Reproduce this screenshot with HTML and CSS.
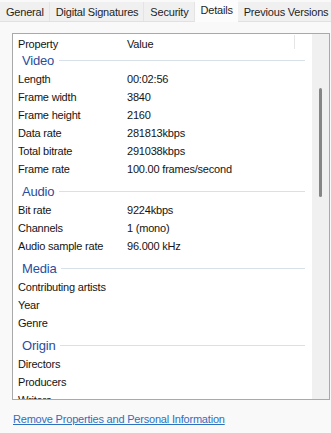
FILE: index.html
```html
<!DOCTYPE html>
<html lang="en">
<head>
  <meta charset="UTF-8" />
  <title>Properties - Details</title>
  <link rel="stylesheet" href="styles.css">
</head>
<body>
  <div class="tabs">
    <div class="tab">General</div>
    <div class="tab">Digital Signatures</div>
    <div class="tab">Security</div>
    <div class="tab active">Details</div>
    <div class="tab">Previous Versions</div>
  </div>

  <div class="panel">
    <div class="listbox">
      <div class="list">
        <div class="list-head">
          <span class="name">Property</span>
          <span class="value">Value</span>
          <span class="rest"></span>
        </div>
        <div class="list-body">
          <div class="group"><span>Video</span><i class="rule"></i></div>
          <div class="row"><span class="name">Length</span><span class="value">00:02:56</span></div>
          <div class="row"><span class="name">Frame width</span><span class="value">3840</span></div>
          <div class="row"><span class="name">Frame height</span><span class="value">2160</span></div>
          <div class="row"><span class="name">Data rate</span><span class="value">281813kbps</span></div>
          <div class="row"><span class="name">Total bitrate</span><span class="value">291038kbps</span></div>
          <div class="row"><span class="name">Frame rate</span><span class="value">100.00 frames/second</span></div>

          <div class="group"><span>Audio</span><i class="rule"></i></div>
          <div class="row"><span class="name">Bit rate</span><span class="value">9224kbps</span></div>
          <div class="row"><span class="name">Channels</span><span class="value">1 (mono)</span></div>
          <div class="row"><span class="name">Audio sample rate</span><span class="value">96.000 kHz</span></div>

          <div class="group"><span>Media</span><i class="rule"></i></div>
          <div class="row"><span class="name">Contributing artists</span><span class="value"></span></div>
          <div class="row"><span class="name">Year</span><span class="value"></span></div>
          <div class="row"><span class="name">Genre</span><span class="value"></span></div>

          <div class="group"><span>Origin</span><i class="rule"></i></div>
          <div class="row"><span class="name">Directors</span><span class="value"></span></div>
          <div class="row"><span class="name">Producers</span><span class="value"></span></div>
          <div class="row"><span class="name">Writers</span><span class="value"></span></div>
        </div>
      </div>
      <div class="scrollbar"><div class="thumb"></div></div>
    </div>

    <a class="link" href="#">Remove Properties and Personal Information</a>
  </div>
</body>
</html>
```

FILE: styles.css
```css
body {
  margin: 0;
  background: #f9f9f9;
  font-family: 'Liberation Sans', Arial, sans-serif;
  font-size: 11px;
  letter-spacing: -0.2px;
  color: #141414;
  width: 331px;
  height: 433px;
  overflow: hidden;
}

.tabs {
  display: flex;
  height: 22px;
  box-sizing: border-box;
  border-bottom: 1px solid #e1e1e1;
  white-space: nowrap;
}

.tab {
  margin-top: 2px;
  padding: 0 5px 0 6px;
  line-height: 21px;
  background: #f0f0f0;
  border-right: 1px solid #e4e4e4;
  color: #1e1e1e;
}

.tab.active {
  margin-top: 0;
  line-height: 20px;
  height: 22px;
  background: #fcfcfc;
  border-right: none;
}

.tab:last-child {
  border-right: none;
}

.panel {
  padding: 11px 1px 0 12px;
}

.listbox {
  display: flex;
  height: 365px;
  border: 1px solid #a9a9a9;
  background: #fff;
}

.list {
  flex: 1;
  display: flex;
  flex-direction: column;
  overflow: hidden;
}

.list-head {
  display: flex;
  height: 18px;
  line-height: 20px;
  flex-shrink: 0;
  background: #fff;
  position: relative;
  z-index: 1;
}

.name {
  width: 114px;
  padding-left: 5px;
  box-sizing: border-box;
  white-space: nowrap;
}

.value {
  width: 167px;
  white-space: nowrap;
}

.list-head .rest {
  flex: 1;
  border-left: 1px solid #e5e5e5;
  margin: 1px 0 3px;
}

.list-body {
  flex: 1;
  overflow: hidden;
}

.group {
  display: flex;
  align-items: center;
  height: 23px;
  padding: 4px 7px 0 9px;
  box-sizing: border-box;
  color: #2b4d9e;
  font-size: 13px;
}

.group:first-child {
  margin-top: -5px;
}

.group .rule {
  flex: 1;
  height: 1px;
  margin: 0 0 1px 5px;
  background: #d6e1ea;
}

.row {
  display: flex;
  height: 18px;
  line-height: 18px;
}

.scrollbar {
  width: 17px;
  background: #f0f0f0;
}

.thumb {
  margin: 54px 0 0 7px;
  width: 3px;
  height: 109px;
  border-radius: 2px;
  background: #858585;
}

.link {
  display: block;
  margin-top: 11px;
  margin-left: 1px;
  line-height: 16px;
  color: #2f6fbf;
  text-decoration: underline;
}
```
